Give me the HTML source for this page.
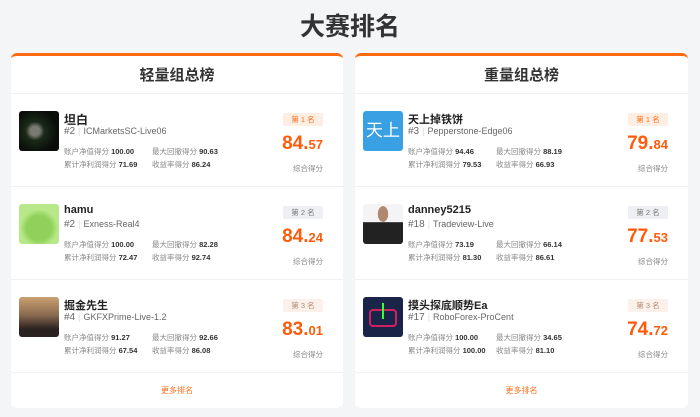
<!DOCTYPE html>
<html><head><meta charset="utf-8"><style>
*{margin:0;padding:0;box-sizing:border-box}
body{width:700px;height:417px;background:#f4f5f7;font-family:"Liberation Sans","Noto Sans CJK SC",sans-serif;color:#333;position:relative;overflow:hidden}
h1{position:absolute;top:10px;left:0;width:700px;text-align:center;font-size:25px;font-weight:bold;color:#333;line-height:34px}
.card{position:absolute;top:53px;height:355px;background:#fff;border-radius:6px;border-top:3px solid #ff6a13;overflow:hidden}
.hd{height:38px;line-height:40px;text-align:center;font-size:15px;font-weight:bold;border-bottom:1px solid #f0f0f0}
.row{position:relative;height:93px;border-bottom:1px solid #f0f0f0}
.av{position:absolute;left:8px;top:17px;width:40px;height:40px;border-radius:3px;overflow:hidden}
.nm{position:absolute;left:53px;top:17px;font-size:11px;font-weight:bold;color:#222}
.id{position:absolute;left:53px;top:32px;font-size:9px;color:#666}
.id b{font-weight:normal;font-size:10px}
.id i{font-style:normal;color:#ddd;margin:0 3px}
.st{position:absolute;font-size:7.5px;color:#888;white-space:nowrap}
.st b{color:#333;font-size:7.5px}
.bd{position:absolute;right:20px;top:19px;width:40px;height:13px;border-radius:2px;font-size:7.5px;line-height:13px;text-align:center}
.sc{position:absolute;right:20px;top:38px;font-size:19px;font-weight:bold;color:#ff5b0a;line-height:24px}
.sc small{font-size:13px}
.lb{position:absolute;right:20px;top:69px;font-size:7.5px;color:#888}
.ft{height:35px;line-height:35px;text-align:center;font-size:8px;color:#ff6a13}
</style></head><body>
<h1>大赛排名</h1>

<div class="card" style="left:11px;width:332px">
<div class="hd">轻量组总榜</div>
<div class="row">
 <div class="av" style="background:radial-gradient(circle at 40% 50%,#7a7a70 0 15%,#1a2a18 30%,#0a0d0a 70%)"></div>
 <div class="nm" style="font-size:12px">坦白</div>
 <div class="id"><b>#2</b><i>|</i>ICMarketsSC-Live06</div>
 <div class="st" style="left:53px;top:52px">账户净值得分 <b>100.00</b></div>
 <div class="st" style="left:141px;top:52px">最大回撤得分 <b>90.63</b></div>
 <div class="st" style="left:53px;top:65px">累计净利润得分 <b>71.69</b></div>
 <div class="st" style="left:141px;top:65px">收益率得分 <b>86.24</b></div>
 <div class="bd" style="background:#fdeee4;color:#ff6a13">第 1 名</div>
 <div class="sc">84.<small>57</small></div>
 <div class="lb">综合得分</div>
</div>
<div class="row">
 <div class="av" style="background:radial-gradient(circle at 50% 60%,#8fd15a 0 40%,#b9e88a 60%)"></div>
 <div class="nm">hamu</div>
 <div class="id"><b>#2</b><i>|</i>Exness-Real4</div>
 <div class="st" style="left:53px;top:52px">账户净值得分 <b>100.00</b></div>
 <div class="st" style="left:141px;top:52px">最大回撤得分 <b>82.28</b></div>
 <div class="st" style="left:53px;top:65px">累计净利润得分 <b>72.47</b></div>
 <div class="st" style="left:141px;top:65px">收益率得分 <b>92.74</b></div>
 <div class="bd" style="background:#eeeff2;color:#777">第 2 名</div>
 <div class="sc">84.<small>24</small></div>
 <div class="lb">综合得分</div>
</div>
<div class="row">
 <div class="av" style="background:linear-gradient(180deg,#c9a070 0,#8a6a50 45%,#2a2220 80%)"></div>
 <div class="nm">掘金先生</div>
 <div class="id"><b>#4</b><i>|</i>GKFXPrime-Live-1.2</div>
 <div class="st" style="left:53px;top:52px">账户净值得分 <b>91.27</b></div>
 <div class="st" style="left:141px;top:52px">最大回撤得分 <b>92.66</b></div>
 <div class="st" style="left:53px;top:65px">累计净利润得分 <b>67.54</b></div>
 <div class="st" style="left:141px;top:65px">收益率得分 <b>86.08</b></div>
 <div class="bd" style="background:#fbf1ea;color:#b08870">第 3 名</div>
 <div class="sc">83.<small>01</small></div>
 <div class="lb">综合得分</div>
</div>
<div class="ft">更多排名</div>
</div>

<div class="card" style="left:355px;width:333px">
<div class="hd">重量组总榜</div>
<div class="row">
 <div class="av" style="background:#3aa0e4;color:#fff;font-size:17px;line-height:40px;text-align:center">天上</div>
 <div class="nm">天上掉铁饼</div>
 <div class="id"><b>#3</b><i>|</i>Pepperstone-Edge06</div>
 <div class="st" style="left:53px;top:52px">账户净值得分 <b>94.46</b></div>
 <div class="st" style="left:141px;top:52px">最大回撤得分 <b>88.19</b></div>
 <div class="st" style="left:53px;top:65px">累计净利润得分 <b>79.53</b></div>
 <div class="st" style="left:141px;top:65px">收益率得分 <b>66.93</b></div>
 <div class="bd" style="background:#fdeee4;color:#ff6a13">第 1 名</div>
 <div class="sc">79.<small>84</small></div>
 <div class="lb">综合得分</div>
</div>
<div class="row">
 <div class="av" style="background:radial-gradient(ellipse at 50% 25%,#b08870 0 18%,transparent 19%),linear-gradient(180deg,#f4f4f6 0 45%,#222 46%)"></div>
 <div class="nm">danney5215</div>
 <div class="id"><b>#18</b><i>|</i>Tradeview-Live</div>
 <div class="st" style="left:53px;top:52px">账户净值得分 <b>73.19</b></div>
 <div class="st" style="left:141px;top:52px">最大回撤得分 <b>66.14</b></div>
 <div class="st" style="left:53px;top:65px">累计净利润得分 <b>81.30</b></div>
 <div class="st" style="left:141px;top:65px">收益率得分 <b>86.61</b></div>
 <div class="bd" style="background:#eeeff2;color:#777">第 2 名</div>
 <div class="sc">77.<small>53</small></div>
 <div class="lb">综合得分</div>
</div>
<div class="row">
 <div class="av" style="background:#1a2348"><div style="position:absolute;left:6px;top:12px;width:28px;height:18px;border:2px solid #d02060;border-radius:4px"></div><div style="position:absolute;left:19px;top:6px;width:2px;height:16px;background:#3f3"></div></div>
 <div class="nm">摸头探底顺势Ea</div>
 <div class="id"><b>#17</b><i>|</i>RoboForex-ProCent</div>
 <div class="st" style="left:53px;top:52px">账户净值得分 <b>100.00</b></div>
 <div class="st" style="left:141px;top:52px">最大回撤得分 <b>34.65</b></div>
 <div class="st" style="left:53px;top:65px">累计净利润得分 <b>100.00</b></div>
 <div class="st" style="left:141px;top:65px">收益率得分 <b>81.10</b></div>
 <div class="bd" style="background:#fbf1ea;color:#b08870">第 3 名</div>
 <div class="sc">74.<small>72</small></div>
 <div class="lb">综合得分</div>
</div>
<div class="ft">更多排名</div>
</div>
</body></html>
